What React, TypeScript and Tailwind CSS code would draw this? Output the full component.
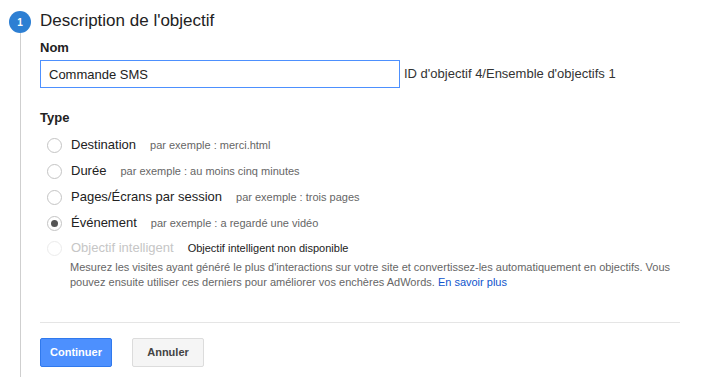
import React from 'react'

const font = { fontFamily: '"Liberation Sans", Arial, sans-serif' }

interface TypeOption {
  label: string
  hint: string
  checked?: boolean
  disabled?: boolean
}

const options: TypeOption[] = [
  { label: 'Destination', hint: 'par exemple : merci.html' },
  { label: 'Durée', hint: 'par exemple : au moins cinq minutes' },
  { label: 'Pages/Écrans par session', hint: 'par exemple : trois pages' },
  { label: 'Événement', hint: 'par exemple : a regardé une vidéo', checked: true },
  { label: 'Objectif intelligent', hint: 'Objectif intelligent non disponible', disabled: true }
]

// Bouton radio façon Google Analytics
const Radio: React.FC<{ checked?: boolean; disabled?: boolean }> = ({ checked, disabled }) => (
  <span
    className={`w-[15px] h-[15px] rounded-full border flex items-center justify-center shrink-0 bg-white ${
      disabled ? 'border-[#ebebeb]' : 'border-[#c4c4c4]'
    }`}
  >
    {checked && <span className="w-[7px] h-[7px] rounded-full bg-[#555]" />}
  </span>
)

export default function App() {
  return (
    <div className="w-[704px] h-[377px] bg-white flex overflow-hidden" style={font}>
      {/* Rail de l'étape */}
      <div className="w-[40px] flex flex-col items-center shrink-0">
        <div className="mt-[11px] w-[22px] h-[22px] rounded-full bg-[#2d7fd3] text-white text-[10px] font-bold flex items-center justify-center">
          1
        </div>
        <div className="flex-1 w-px bg-[#cfcfcf]" />
      </div>

      <div className="flex-1 flex flex-col">
        <h1 className="mt-[10px] text-[17px] leading-[22px] text-[#222]">Description de l'objectif</h1>

        <div className="mt-[8px] text-[13px] leading-[16px] font-bold text-[#222]">Nom</div>
        <div className="mt-[4px] flex items-center">
          <input
            readOnly
            value="Commande SMS"
            className="w-[360px] h-[28px] border border-[#4d90fe] px-[8px] text-[13px] text-[#222] outline-none"
            style={font}
          />
          <span className="ml-[4px] text-[13px] text-[#333]">ID d'objectif 4/Ensemble d'objectifs 1</span>
        </div>

        <div className="mt-[22px] text-[13px] leading-[16px] font-bold text-[#222]">Type</div>
        <div className="mt-[6px] flex flex-col">
          {options.map((o, i) => (
            <div
              key={o.label}
              className={`flex items-center pl-[7px] ${i === options.length - 1 ? 'h-[24px]' : 'h-[26px]'}`}
            >
              <Radio checked={o.checked} disabled={o.disabled} />
              <span className={`ml-[9px] text-[13px] ${o.disabled ? 'text-[#c6c6c6]' : 'text-[#222]'}`}>
                {o.label}
              </span>
              <span className={`ml-[14px] text-[11px] ${o.disabled ? 'text-[#222]' : 'text-[#666]'}`}>
                {o.hint}
              </span>
            </div>
          ))}
        </div>
        <p className="pl-[30px] pr-[24px] text-[11px] leading-[15px] text-[#666]">
          Mesurez les visites ayant généré le plus d'interactions sur votre site et convertissez-les automatiquement en
          objectifs. Vous pouvez ensuite utiliser ces derniers pour améliorer vos enchères AdWords.{' '}
          <a className="text-[#1155cc]">En savoir plus</a>
        </p>

        <div className="mt-[32px] w-[640px] h-px bg-[#e5e5e5]" />

        <div className="mt-[15px] flex gap-[20px]">
          <button className="w-[72px] h-[29px] rounded-[2px] border border-[#3079ed] bg-[#4d90fe] text-white text-[11px] font-bold">
            Continuer
          </button>
          <button className="w-[72px] h-[29px] rounded-[2px] border border-[#dcdcdc] bg-[#f5f5f5] text-[#444] text-[11px] font-bold">
            Annuler
          </button>
        </div>
      </div>
    </div>
  )
}
